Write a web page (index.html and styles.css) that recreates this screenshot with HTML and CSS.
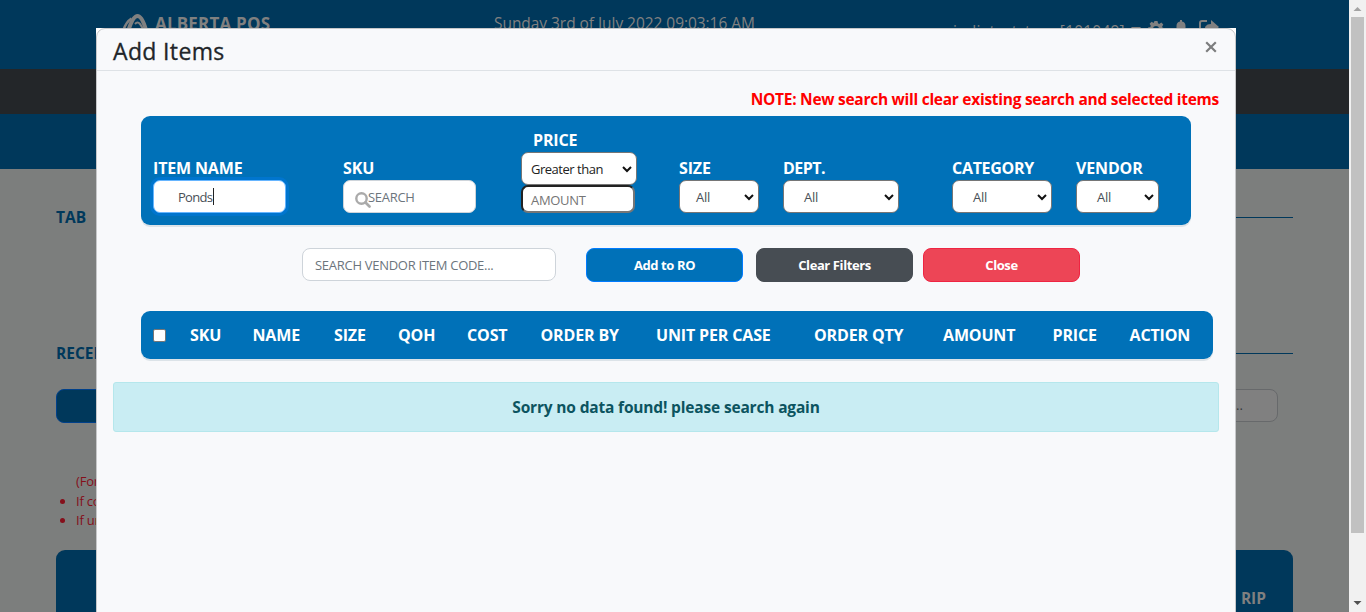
FILE: index.html
```html
<!DOCTYPE html>
<html lang="en">
<head>
<meta charset="utf-8">
<title>Alberta POS - Add Items</title>
<link rel="stylesheet" href="styles.css">
</head>
<body>
<div class="viewport">
  <div class="page">
    <header class="topbar">
      <div class="brand">
        <svg class="logo" width="26" height="20" viewBox="0 0 26 20" fill="none" stroke="#808080"><path d="M1.500 17Q4 9 9.500 5.500" stroke-width="2.600"/><path d="M6.500 17Q11 3 15.500 3T24 17" stroke-width="4"/><path d="M13 11Q15.500 8 18 11T21 17" stroke-width="2"/></svg>
        <span class="t-brand">ALBERTA POS</span>
      </div>
      <div class="clock">Sunday 3rd of July 2022 09:03:16 AM</div>
      <div class="user">
        <span class="t-user">indiateststore [101049]</span>
        <svg class="caret" width="10" height="6" viewBox="0 0 10 6"><path d="M0 0h10L5 6z" fill="#808080"/></svg>
        <svg class="gear" width="16" height="16" viewBox="0 0 16 16"><path d="M6.500 0h3l.5 2.300 1.200.6 2.100-1.300 2 2-1.200 2.100.5 1.100L16 7v3l-2.300.5-.5 1.100 1.200 2-2 2-2.100-1.200L6.500 16l-.5-2-1.200-.5-2 1.200-2-2 1.200-2L0 9V6.500l2.300-.5.500-1.200-1.200-2 2-2 2 1.200z" fill="#808080"/><circle cx="8" cy="8" r="3" fill="#00385b"/></svg>
        <svg class="bell" width="12" height="16" viewBox="0 0 12 16"><path d="M5 0h2v1.500Q10.500 2 10.500 6v4L12 13H0l1.500-3V6Q1.500 2 5 1.500z" fill="#808080"/></svg>
        <svg class="exit" width="20" height="16" viewBox="0 0 20 16"><path d="M8 1H3Q1 1 1 3v10q0 2 2 2h9" fill="none" stroke="#808080" stroke-width="2"/><path d="M12 0l8 7-8 7V10Q8 9 6 13 4 4 12 4z" fill="#808080"/></svg>
      </div>
    </header>
    <div class="menu"></div>
    <div class="subbar"></div>
    <main class="content">
      <div class="rule"><span>TAB</span></div>
      <div class="rule rule-second"><span>RECEI</span></div>
      <div class="tools"><div class="tool-button"></div><div class="tool-search">..</div></div>
      <ul class="notes">
        <li class="plain">(For</li><li>If co</li><li>If un</li>
      </ul>
      <div class="grid-head"><b>RIP</b></div>
    </main>
  </div>
  <div class="scroll"><svg width="17" height="17"><path d="M4.500 11h8l-4-4z" fill="#a3a3a3"/></svg><div class="thumb"></div><svg width="17" height="17"><path d="M4.500 6h8l-4 4z" fill="#505050"/></svg></div>

  <div class="modal">
    <div class="modal-content">
      <div class="modal-header">
        <h1>Add Items</h1>
        <svg class="x" width="12" height="12" viewBox="0 0 12 12"><path d="M1.200 1.200l9.600 9.600M10.800 1.200l-9.600 9.600" stroke="#7c7d7e" stroke-width="2.200"/></svg>
      </div>
      <div class="warning"><span>NOTE: New search will clear existing search and selected items</span></div>
      <section class="filters">
        <div class="field name"><label>ITEM NAME</label><div class="box focus"><span>Ponds</span><i class="cursor"></i></div></div>
        <div class="field sku"><label>SKU</label><div class="box search"><svg width="16" height="16" viewBox="0 0 16 16"><circle cx="6.500" cy="6.500" r="5.200" fill="none" stroke="#aaa" stroke-width="2.400"/><path d="M10.500 10.500l4 4" stroke="#aaa" stroke-width="2.700" stroke-linecap="round"/></svg><span class="hint">SEARCH</span></div></div>
        <div class="field price"><label>PRICE</label><div class="box select"><span>Greater than</span><svg width="10" height="7" viewBox="0 0 10 7"><path d="M1 1l4 4 4-4" fill="none" stroke="#111" stroke-width="2"/></svg></div><div class="box amount"><span>AMOUNT</span></div></div>
        <div class="field size"><label>SIZE</label><div class="box select"><span>All</span><svg width="10" height="7" viewBox="0 0 10 7"><path d="M1 1l4 4 4-4" fill="none" stroke="#111" stroke-width="2"/></svg></div></div>
        <div class="field dept"><label>DEPT.</label><div class="box select"><span>All</span><svg width="10" height="7" viewBox="0 0 10 7"><path d="M1 1l4 4 4-4" fill="none" stroke="#111" stroke-width="2"/></svg></div></div>
        <div class="field category"><label>CATEGORY</label><div class="box select"><span>All</span><svg width="10" height="7" viewBox="0 0 10 7"><path d="M1 1l4 4 4-4" fill="none" stroke="#111" stroke-width="2"/></svg></div></div>
        <div class="field vendor"><label>VENDOR</label><div class="box select"><span>All</span><svg width="10" height="7" viewBox="0 0 10 7"><path d="M1 1l4 4 4-4" fill="none" stroke="#111" stroke-width="2"/></svg></div></div>
      </section>
      <section class="actions">
        <div class="vendor-search"><span>SEARCH VENDOR ITEM CODE...</span></div>
        <button class="btn add"><span>Add to RO</span></button>
        <button class="btn clear"><span>Clear Filters</span></button>
        <button class="btn close"><span>Close</span></button>
      </section>
      <section class="columns">
        <i class="check"></i>
        <span>SKU</span><span>NAME</span><span>SIZE</span><span>QOH</span><span>COST</span><span>ORDER BY</span><span>UNIT PER CASE</span><span>ORDER QTY</span><span>AMOUNT</span><span>PRICE</span><span>ACTION</span>
      </section>
      <div class="alert"><span>Sorry no data found! please search again</span></div>
    </div>
  </div>
</div>
</body>
</html>
```

FILE: styles.css
```css
* { box-sizing: border-box; }
body { margin: 0; font-family: "Open Sans", "Noto Sans", sans-serif; overflow: hidden; white-space: nowrap; }
svg { display: block; flex: none; }
.viewport { position: relative; display: flex; width: 1366px; height: 612px; overflow: hidden; }
.page { width: 1349px; height: 612px; overflow: hidden; background: #7c7e7d; }
.topbar { height: 69px; background: #00385b; display: flex; align-items: flex-start; padding: 12px 0 0 122px; color: #808080; }
.brand { display: flex; width: 372px; gap: 7px; }
.logo { margin-top: 1px; }
.t-brand { font-size: 17px; font-weight: 700; line-height: 23px; letter-spacing: .2px; }
.clock { width: 459px; font-size: 15.500px; line-height: 22px; letter-spacing: -.05px; }
.user { display: flex; padding-top: 8px; }
.t-user { width: 178px; font-size: 15.500px; line-height: 22px; letter-spacing: .2px; }
.caret { margin-top: 7px; }
.gear { margin: 1px 0 0 7px; }
.bell { margin: 0 0 0 11px; }
.exit { margin-left: 12px; }
.menu { height: 45px; background: #232629; }
.subbar { height: 55px; background: #00385b; }
.content { padding: 36px 56px 0; }
.rule { height: 24px; display: flex; align-items: center; color: #00385b; font-size: 15.500px; font-weight: 700; gap: 14px; }
.rule::after { content: ""; flex: 1; height: 1px; background: #00385b; }
.rule-second { margin-top: 112px; }
.tools { display: flex; justify-content: space-between; height: 34px; margin-top: 24px; padding-right: 15px; }
.tool-button { width: 157px; border-radius: 8px; border: 1px solid #00408a; background: #00385b; }
.tool-search { width: 60px; height: 33px; border: 1px solid #67696b; border-radius: 8px; background: #808080; padding-left: 17px; font-size: 13px; line-height: 31px; color: #36393c; }
.notes { margin: 49px 0 0; padding: 0 0 0 20px; color: #850f1b; font-size: 13px; line-height: 19.500px; letter-spacing: -.2px; }
.notes .plain { list-style: none; }
.grid-head { margin-top: 19px; height: 80px; border-radius: 9px 9px 0 0; background: #00385b; color: #808080; display: flex; justify-content: flex-end; padding: 37px 27px 0; font-size: 15.500px; line-height: 22px; }
.scroll { width: 17px; height: 612px; background: #f1f1f1; display: flex; flex-direction: column; }
.thumb { width: 13px; height: 516px; margin: 0 2px 62px; background: #c1c1c1; }
.modal { position: absolute; left: 96px; top: 28px; width: 1140px; height: 700px; background: #fff; }
.modal-content { height: 700px; border: 1px solid #c6c7c9; border-radius: 9px; background: #f8f9fb; }
.modal-header { height: 42px; border-bottom: 1px solid #dee2e6; display: flex; justify-content: space-between; padding: 0 18px 0 16px; }
h1 { margin: 7px 0 0; color: #212529; font-size: 23px; line-height: 30px; font-weight: 500; letter-spacing: .35px; -webkit-text-stroke: .3px #212529; }
.x { margin-top: 12px; }
.warning { display: flex; justify-content: flex-end; padding: 17px 16px 0; height: 45px; color: red; font-size: 15.500px; line-height: 23px; font-weight: 700; letter-spacing: -.27px; }
.filters { width: 1050px; height: 109px; margin-left: 44px; border-radius: 9px; background: #0071b8; box-shadow: 0 2px 0 #dce3e8; display: flex; align-items: flex-end; padding: 0 0 12px 12px; }
.field label { display: block; height: 24px; line-height: 24px; color: #fff; font-size: 16px; font-weight: 700; letter-spacing: -.15px; }
.dept label { letter-spacing: -.5px; }
.category label { letter-spacing: -.3px; }
.box { display: flex; align-items: center; height: 33px; border: 1px solid #767676; border-radius: 7px; background: #fff; color: #495057; font-size: 13px; line-height: 20px; letter-spacing: -.3px; }
.name { width: 133px; }
.sku { width: 133px; margin-left: 57px; }
.price { width: 116px; margin-left: 45px; }
.size { width: 80px; margin-left: 42px; }
.dept { width: 116px; margin-left: 24px; }
.category { width: 100px; margin-left: 53px; }
.vendor { width: 83px; margin-left: 24px; }
.focus { padding-left: 24px; border-color: #66b5ff; box-shadow: 0 0 0 3px #0075ce; letter-spacing: -.7px; }
.focus .cursor { margin-left: 1px; }
.cursor { width: 1px; height: 17px; background: #222; }
.search { padding-left: 11px; border-color: #ced4da; }
.search svg { margin-top: 7px; }
.hint { color: #6c757d; margin-left: -3px; }
.select { justify-content: space-between; padding: 1px 4px 0 16px; }
.dept .select, .vendor .select { padding-left: 20px; }
.category .select { padding-left: 20px; }
.price label { padding-left: 12px; }
.price .select { padding-left: 9px; color: #222; letter-spacing: -.48px; }
.amount { width: 114px; height: 28px; border: 2px solid #767676; border-top-color: #222; border-left-color: #222; padding: 2px 0 0 8px; color: #757575; }
.actions { display: flex; padding: 23px 0 0 205px; height: 86px; }
.vendor-search { width: 254px; height: 33px; border: 1px solid #ced4da; border-radius: 8px; background: #fff; padding: 1px 12px; color: #6c757d; font-size: 13px; line-height: 31px; letter-spacing: -.28px; }
.btn { width: 157px; height: 34px; padding: 0; border-radius: 8px; color: #fff; font: 700 13px/30px "Open Sans", sans-serif; letter-spacing: -.4px; }
.add { margin-left: 30px; background: #0071b8; border: 1px solid #007bff; }
.clear { margin-left: 13px; background: #474d53; border: 1px solid #474d53; }
.close { margin-left: 10px; background: #ed4556; border: 1px solid #ef2442; }
.columns { width: 1072px; height: 48px; margin-left: 44px; padding-left: 12px; border-radius: 9px; background: #0071b8; box-shadow: 0 2px 0 #dce3e8; display: grid; align-items: center; grid-template-columns: 37px 62.500px 81.500px 64px 69px 73.500px 115.500px 158px 129px 109.500px 77px 83.500px; color: #fff; font-size: 16px; font-weight: 700; letter-spacing: -.15px; }
.check { width: 13px; height: 13px; border: 1px solid #767676; border-radius: 2px; background: #fff; }
.alert { margin: 23px 16px 0; height: 50px; border: 1px solid #b5e7ec; border-radius: 3px; background: #c9edf3; color: #0c5460; display: flex; justify-content: center; align-items: center; font-size: 15.500px; font-weight: 700; letter-spacing: -.17px; }
```
